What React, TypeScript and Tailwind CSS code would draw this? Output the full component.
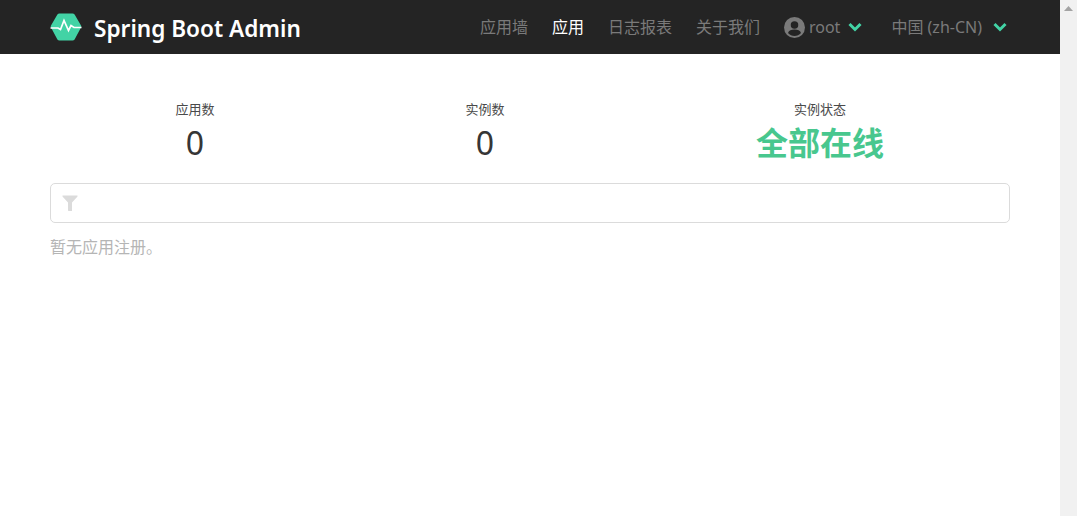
import React from "react";

const FONT = "font-['Noto_Sans','Noto_Sans_CJK_SC',sans-serif]";

const navItems = [
  { label: "应用墙", active: false },
  { label: "应用", active: true },
  { label: "日志报表", active: false },
  { label: "关于我们", active: false },
];

const stats = [
  { label: "应用数", value: "0", width: "w-[290px]" },
  { label: "实例数", value: "0", width: "w-[290px]" },
];

const Chevron = () => (
  <svg width="14" height="14" viewBox="0 0 14 14" className="text-[#42d3a5]">
    <path d="M1.5 4 L7 9.5 L12.5 4" fill="none" stroke="currentColor" strokeWidth="3" />
  </svg>
);

const Logo = () => (
  <svg width="32" height="28" viewBox="0 0 32 28">
    <path
      d="M1 14.5 Q0.4 13.5 1 12.5 L7.4 1.6 Q8.2 0.5 9.4 0.5 H22.6 Q23.8 0.5 24.6 1.6 L31 12.5 Q31.6 13.5 31 14.5 L24.6 26.4 Q23.8 27.5 22.6 27.5 H9.4 Q8.2 27.5 7.4 26.4 Z"
      fill="#42d3a5"
    />
    <path
      d="M0.5 15 H8 L10.5 16.5 L14 7.5 L18.5 17.5 L21 12.5 L24 14.5 H31.5"
      fill="none"
      stroke="#fff"
      strokeWidth="1.7"
    />
  </svg>
);

const UserIcon = () => (
  <svg width="21" height="21" viewBox="0 0 20 20" className="text-[#7a7a7a]">
    <circle cx="10" cy="10" r="10" fill="currentColor" />
    <circle cx="10" cy="7.6" r="3.6" fill="#242424" />
    <path d="M3.8 15.2 C4.6 12.6 7 12 10 12 C13 12 15.4 12.6 16.2 15.2 C14.6 17 12.4 18 10 18 C7.6 18 5.4 17 3.8 15.2 Z" fill="#242424" />
  </svg>
);

const Funnel = () => (
  <svg width="16" height="16" viewBox="0 0 16 16">
    <path d="M0.5 0.5 H15.5 V1.5 L10 7.5 V16 H6.5 L6 15.5 V7.5 L0.5 1.5 Z" fill="#dbdbdb" />
  </svg>
);

export default function App() {
  return (
    <div className={`${FONT} flex h-[516px] w-[1077px] overflow-hidden bg-white`}>
      <div className="flex w-[1060px] flex-col">
        <nav className="flex h-[54px] items-center bg-[#242424] pl-[50px] pr-[53px]">
          <Logo />
          <span className="ml-[12px] pt-[3px] text-[22.6px] font-semibold text-white">Spring Boot Admin</span>
          <div className="ml-auto flex items-center text-[16px] text-[#7a7a7a]">
            {navItems.map((item) => (
              <span key={item.label} className={`mr-[24px] ${item.active ? "text-white" : ""}`}>
                {item.label}
              </span>
            ))}
            <UserIcon />
            <span className="ml-[4px]">root</span>
            <span className="ml-[8px]"><Chevron /></span>
            <span className="ml-[29px]">中国 (zh-CN)</span>
            <span className="ml-[11px]"><Chevron /></span>
          </div>
        </nav>
        <main className="flex flex-col px-[50px] pt-[47px]">
          <div className="flex">
            {stats.map((stat) => (
              <div key={stat.label} className={`${stat.width} text-center`}>
                <p className="text-[13px] leading-[16px] text-[#4a4a4a]">{stat.label}</p>
                <p className="mt-[6px] text-[32px] leading-[40px] text-[#363636]">{stat.value}</p>
              </div>
            ))}
            <div className="flex-1 text-center">
              <p className="text-[13px] leading-[16px] text-[#4a4a4a]">实例状态</p>
              <p className="mt-[6px] text-[32px] font-bold leading-[40px] text-[#48c78e]">全部在线</p>
            </div>
          </div>
          <div className="mt-[20px] flex h-[40px] items-center rounded-[5px] border border-[#dbdbdb] pl-[11px]">
            <Funnel />
          </div>
          <p className="mt-[12px] text-[16px] leading-[24px] text-[#b5b5b5]">暂无应用注册。</p>
        </main>
      </div>
      <div className="flex w-[17px] flex-col items-center bg-[#f1f1f1] pt-[6px]">
        <svg width="9" height="5" viewBox="0 0 9 5">
          <path d="M4.5 0 L9 5 H0 Z" fill="#a3a3a3" />
        </svg>
      </div>
    </div>
  );
}
